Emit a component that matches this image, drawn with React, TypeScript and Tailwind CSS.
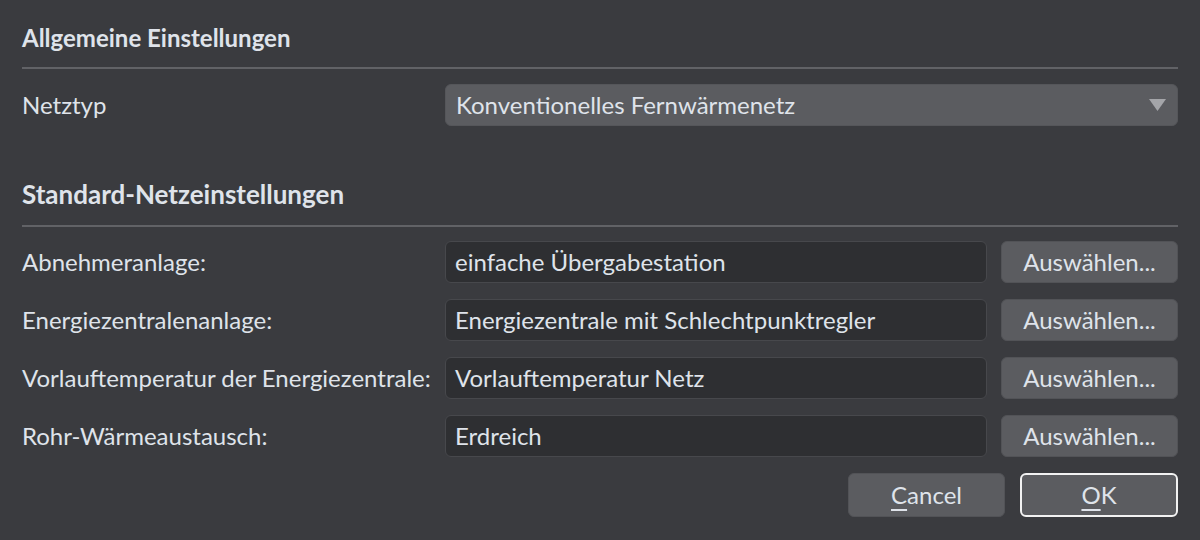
const rows = [
  { label: 'Abnehmeranlage:', value: 'einfache Übergabestation' },
  { label: 'Energiezentralenanlage:', value: 'Energiezentrale mit Schlechtpunktregler' },
  { label: 'Vorlauftemperatur der Energiezentrale:', value: 'Vorlauftemperatur Netz' },
  { label: 'Rohr-Wärmeaustausch:', value: 'Erdreich' },
]

const font = { fontFamily: 'Lato, "Noto Sans", sans-serif' }

export default function App() {
  return (
    <div className="w-[1200px] h-[540px] bg-[#3a3b3f] text-[#dfe3ea] px-[22px] text-[24px] leading-6" style={font}>
      <div className="pt-[26px] pb-[17px] border-b-2 border-[#616266]">
        <h2 className="font-bold leading-6">Allgemeine Einstellungen</h2>
      </div>

      <div className="flex items-center mt-[15px] h-[42px]">
        <div className="w-[423px]">Netztyp</div>
        <div className="flex-1 h-[42px] flex items-center justify-between rounded-md bg-[#5b5c60] border border-[#55565a] pl-[10px] pr-[11px]">
          <span>Konventionelles Fernwärmenetz</span>
          <svg width="17" height="12" viewBox="0 0 17 12">
            <path d="M0 0 H17 L8.5 12 Z" fill="#a4a5a9" />
          </svg>
        </div>
      </div>

      <div className="pt-[55px] pb-[18px] border-b-2 border-[#616266]">
        <h2 className="font-bold text-[26px] leading-[26px]">Standard-Netzeinstellungen</h2>
      </div>

      <div className="flex flex-col gap-[16px] mt-[14px]">
        {rows.map((r) => (
          <div key={r.label} className="flex items-center h-[42px]">
            <div className="w-[423px] whitespace-nowrap">{r.label}</div>
            <div className="w-[542px] h-[42px] flex items-center rounded-md bg-[#2e2f32] border border-[#47484c] pl-[9px]">
              {r.value}
            </div>
            <button className="ml-[14px] flex-1 h-[42px] rounded-md bg-[#5b5c60] border border-[#525357]">
              Auswählen...
            </button>
          </div>
        ))}
      </div>

      <div className="flex justify-end gap-[15px] mt-[16px]">
        <button className="w-[157px] h-[44px] rounded-md bg-[#5b5c60] border border-[#525357]">
          <span className="underline underline-offset-[5px] decoration-2">C</span>ancel
        </button>
        <button className="w-[158px] h-[44px] rounded-md bg-[#5b5c60] border-2 border-[#f2f2f2]">
          <span className="underline underline-offset-[5px] decoration-2">O</span>K
        </button>
      </div>
    </div>
  )
}
